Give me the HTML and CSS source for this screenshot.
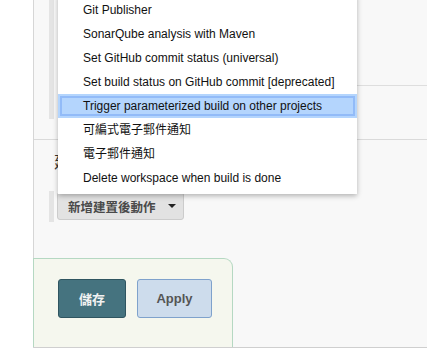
FILE: index.html
```html
<!DOCTYPE html>
<html>
<head>
<meta charset="utf-8">
<link rel="stylesheet" href="styles.css">
</head>
<body>
<div class="page">
  <div class="gutter"></div>
  <div class="main">
    <div class="chunk chunk-top">
      <div class="handle"></div>
      <div class="chunk-body">
        <div class="row-line"></div>
      </div>
    </div>
    <div class="section">
      <div class="section-title">建置後動作</div>
    </div>
    <div class="chunk chunk-btn">
      <div class="handle"></div>
      <div class="chunk-body">
        <button class="add-btn">新增建置後動作<span class="caret"></span></button>
      </div>
    </div>
    <div class="bottom-bar">
      <button class="btn save">儲存</button>
      <button class="btn apply">Apply</button>
    </div>
  </div>
  <ul class="menu">
    <li>Git Publisher</li>
    <li>SonarQube analysis with Maven</li>
    <li>Set GitHub commit status (universal)</li>
    <li>Set build status on GitHub commit [deprecated]</li>
    <li class="active">Trigger parameterized build on other projects</li>
    <li>可編式電子郵件通知</li>
    <li>電子郵件通知</li>
    <li>Delete workspace when build is done</li>
  </ul>
</div>
</body>
</html>
```

FILE: styles.css
```css
html, body {
  margin: 0;
  padding: 0;
  background: #fff;
  font-family: "Liberation Sans", Arial, "Noto Sans CJK TC", sans-serif;
}
.page {
  position: relative;
  width: 427px;
  height: 351px;
  overflow: hidden;
  display: flex;
  align-items: flex-start;
}
.gutter {
  width: 33px;
  flex: none;
}
.main {
  flex: 1;
  height: 348px;
  box-sizing: border-box;
  background: #f8f8f8;
  border-left: 1px solid #d6d6d6;
  border-bottom: 1px solid #cfcfcf;
  display: flex;
  flex-direction: column;
}
.chunk {
  display: flex;
  margin-left: 15px;
}
.handle {
  width: 5px;
  flex: none;
  background: #e4e4e4;
}
.chunk-top {
  height: 119px;
}
.chunk-body {
  flex: 1;
}
.chunk-top .chunk-body {
  padding-left: 4px;
}
.row-line {
  border-bottom: 1px solid #dedede;
  box-sizing: border-box;
  height: 86px;
}
.section {
  margin-top: 20px;
  border-top: 1px solid #dadada;
  padding: 10px 0 0 20px;
  height: 53px;
  box-sizing: border-box;
}
.section-title {
  font-family: "Noto Sans CJK TC", sans-serif;
  font-size: 16px;
  line-height: 22px;
  color: #333;
}
.chunk-btn {
  height: 31px;
}
.chunk-btn .chunk-body {
  padding: 1px 0 0 3px;
}
.add-btn {
  display: flex;
  align-items: center;
  height: 28px;
  width: 127px;
  box-sizing: border-box;
  padding: 0 0 0 10px;
  border: 1px solid #cccccc;
  border-radius: 3px;
  background: #e2e2e2;
  color: #4a4a4a;
  font-family: "Noto Sans CJK TC", sans-serif;
  font-weight: bold;
  font-size: 12.5px;
}
.caret {
  display: inline-block;
  margin-left: 12px;
  width: 0;
  height: 0;
  border-left: 4px solid transparent;
  border-right: 4px solid transparent;
  border-top: 4px solid #222;
}
.bottom-bar {
  margin-top: 36px;
  margin-left: -1px;
  width: 200px;
  height: 89px;
  box-sizing: border-box;
  background: #f5f7ee;
  border: 1px solid #b5d8c2;
  border-bottom: none;
  border-top-right-radius: 9px;
  display: flex;
  align-items: flex-start;
  gap: 11px;
  padding: 20px 0 0 24px;
}
.btn {
  height: 39px;
  box-sizing: border-box;
  border-radius: 3px;
  font-family: "Liberation Sans", Arial, "Noto Sans CJK TC", sans-serif;
  font-weight: bold;
  font-size: 13px;
}
.save {
  width: 68px;
  background: #45737f;
  border: 1px solid #2f5560;
  color: #f2f2f2;
}
.apply {
  width: 75px;
  background: #cddcec;
  border: 1px solid #7fa2cc;
  color: #555;
}
.menu {
  position: absolute;
  left: 58px;
  top: -6px;
  width: 299px;
  margin: 0;
  padding: 4px 0;
  list-style: none;
  background: #fff;
  box-shadow: 0 2px 5px rgba(0, 0, 0, 0.28);
  font-family: "Liberation Sans", Arial, "Noto Sans CJK TC", sans-serif;
  font-size: 12px;
  color: #111;
}
.menu li {
  height: 24px;
  line-height: 24px;
  padding-left: 25px;
  white-space: nowrap;
}
.menu li.active {
  background: #b4d5fd;
  outline: 2px solid #92bbf8;
  outline-offset: -4px;
}
```
